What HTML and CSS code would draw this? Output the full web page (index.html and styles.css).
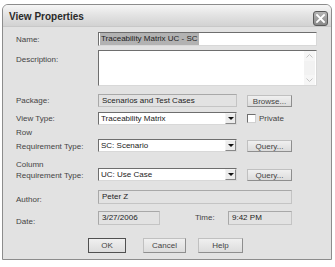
FILE: index.html
```html
<!DOCTYPE html>
<html>
<head>
<meta charset="utf-8">
<link rel="stylesheet" href="styles.css">
</head>
<body>
<div class="window">
  <div class="titlebar">
    <span class="title">View Properties</span>
    <span class="close"><svg width="15" height="15" viewBox="0 0 15 15"><path d="M4 4 L11 11 M11 4 L4 11" stroke="#fff" stroke-width="1.8" stroke-linecap="square"/></svg></span>
  </div>
  <div class="content">
    <div class="row r-name">
      <span class="lbl">Name:</span>
      <div class="field white w-full"><span class="sel">Traceability Matrix UC - SC</span></div>
    </div>
    <div class="row r-desc">
      <span class="lbl lbl-top">Description:</span>
      <div class="field white w-full desc">
        <div class="scroll">
          <span class="sarrow"><svg width="9" height="6" viewBox="0 0 9 6"><path d="M1.5 4.5 L4.5 1.5 L7.5 4.5" fill="none" stroke="#c4c4c4" stroke-width="1"/></svg></span>
          <span class="sarrow"><svg width="9" height="6" viewBox="0 0 9 6"><path d="M1.5 1.5 L4.5 4.5 L7.5 1.5" fill="none" stroke="#c4c4c4" stroke-width="1"/></svg></span>
        </div>
      </div>
    </div>
    <div class="row r-pkg">
      <span class="lbl">Package:</span>
      <div class="field ro w-mid">Scenarios and Test Cases</div>
      <span class="btn side">Browse...</span>
    </div>
    <div class="row r-view">
      <span class="lbl">View Type:</span>
      <div class="select w-mid">Traceability Matrix<span class="drop"><span class="tri"></span></span></div>
      <span class="check"></span>
      <span class="chk-text">Private</span>
    </div>
    <div class="row r-rowreq">
      <span class="lbl lbl2"><span class="l1 l1-row">Row</span><span class="l2 l2-row">Requirement Type:</span></span>
      <div class="select w-mid sel-bottom">SC: Scenario<span class="drop"><span class="tri"></span></span></div>
      <span class="btn side sel-bottom">Query...</span>
    </div>
    <div class="row r-colreq">
      <span class="lbl lbl2"><span class="l1 l1-col">Column</span><span class="l2 l2-col">Requirement Type:</span></span>
      <div class="select w-mid">UC: Use Case<span class="drop"><span class="tri"></span></span></div>
      <span class="btn side">Query...</span>
    </div>
    <div class="row r-author">
      <span class="lbl lbl-author">Author:</span>
      <div class="field ro w-author">Peter Z</div>
    </div>
    <div class="row r-date">
      <span class="lbl lbl-date">Date:</span>
      <div class="field ro w-date">3/27/2006</div>
      <span class="time-lbl">Time:</span>
      <div class="field ro w-time">9:42 PM</div>
    </div>
    <div class="row r-buttons">
      <span class="btn b-ok">OK</span>
      <span class="btn b-cancel">Cancel</span>
      <span class="btn b-help">Help</span>
    </div>
  </div>
</div>
</body>
</html>
```

FILE: styles.css
```css
html, body {
  margin: 0;
  padding: 0;
  background: #ffffff;
}
body {
  font-family: "Liberation Sans", Arial, sans-serif;
  font-size: 8px;
  color: #3c3c3c;
}
.window {
  margin: 4px 0 0 2px;
  width: 330px;
  height: 256px;
  box-sizing: border-box;
  border: 1px solid #8c8c8c;
  border-radius: 6px 6px 0 0;
  background: #e2e2e2;
  display: flex;
  flex-direction: column;
  overflow: hidden;
}
.titlebar {
  height: 22px;
  flex: none;
  display: flex;
  align-items: center;
  justify-content: space-between;
  padding: 0 3px 0 6px;
  background: linear-gradient(#f6f6f6 0%, #e4e4e4 45%, #d2d2d2 100%);
  border-bottom: 1px solid #c8c8c8;
  box-sizing: border-box;
}
.title {
  font-weight: bold;
  font-size: 10px;
  color: #2a2a2a;
  margin-top: 2px;
}
.close {
  width: 15px;
  height: 15px;
  box-sizing: border-box;
  border: 1px solid #5a5a5a;
  border-radius: 3px;
  background: linear-gradient(#b4b4b4, #8a8a8a);
  display: flex;
  margin-top: 6px;
}
.close svg {
  margin: -1px;
}
.content {
  flex: 1;
  padding: 0 0 0 13px;
  display: flex;
  flex-direction: column;
}
.row {
  display: flex;
  align-items: center;
}
.lbl {
  width: 82px;
  flex: none;
  color: #444;
}
.field {
  box-sizing: border-box;
  padding: 0 2px;
  white-space: nowrap;
  overflow: hidden;
  color: #222;
}
.white {
  background: #fff;
  border: 1px solid #d8d8d8;
  border-top-color: #6e6e6e;
  border-left-color: #6e6e6e;
}
.ro {
  background: #e2e2e2;
  border: 1px solid #a8a8a8;
  border-right-color: #c4c4c4;
  border-bottom-color: #c4c4c4;
  padding-left: 3px;
}
.w-full { width: 219px; }
.w-mid { width: 139px; }
.w-author { width: 194px; }
.w-date { width: 62px; }
.w-time { width: 64px; }

.r-name { margin-top: 5px; height: 14px; }
.r-name .field { height: 14px; line-height: 12px; padding: 0 1px; }
.sel {
  background: #b2b2b2;
  display: inline-block;
  height: 12px;
  padding: 0 1px;
  color: #1e1e1e;
}
.r-desc {
  margin-top: 4px;
  height: 36px;
  align-items: flex-start;
}
.lbl-top { padding-top: 5px; line-height: 10px; }
.desc {
  height: 36px;
  display: flex;
  justify-content: flex-end;
  padding: 0;
}
.scroll {
  width: 11px;
  display: flex;
  flex-direction: column;
  justify-content: space-between;
  background: #f2f2f2;
  margin-right: 1px;
}
.sarrow {
  height: 10px;
  display: flex;
  align-items: center;
  justify-content: center;
  background: #f6f6f6;
}
.r-pkg { margin-top: 8px; height: 13px; }
.r-pkg .field { height: 13px; line-height: 11px; }
.btn {
  box-sizing: border-box;
  display: flex;
  align-items: center;
  justify-content: center;
  background: linear-gradient(#f0f0f0, #dcdcdc);
  border: 1px solid #8e8e8e;
  border-top-color: #c0c0c0;
  border-left-color: #c0c0c0;
  color: #444;
  flex: none;
}
.side {
  width: 45px;
  height: 12px;
  margin-left: 10px;
  margin-top: 1px;
}
.r-view { margin-top: 5px; height: 13px; }
.select {
  box-sizing: border-box;
  height: 13px;
  background: #fff;
  border: 1px solid #d8d8d8;
  border-top-color: #6e6e6e;
  border-left-color: #6e6e6e;
  padding-left: 2px;
  display: flex;
  align-items: center;
  justify-content: space-between;
  color: #222;
}
.drop {
  width: 11px;
  height: 11px;
  box-sizing: border-box;
  background: #ececec;
  border: 1px solid #888;
  border-top-color: #f4f4f4;
  border-left-color: #f4f4f4;
  display: flex;
  align-items: center;
  justify-content: center;
}
.tri {
  width: 0;
  height: 0;
  border-left: 3px solid transparent;
  border-right: 3px solid transparent;
  border-top: 3px solid #111;
}
.check {
  width: 9px;
  height: 9px;
  box-sizing: border-box;
  background: #fff;
  border: 1px solid #6e6e6e;
  border-right-color: #d0d0d0;
  border-bottom-color: #d0d0d0;
  margin-left: 10px;
}
.chk-text {
  margin-left: 3px;
  color: #444;
}
.lbl2 {
  display: flex;
  flex-direction: column;
}
.r-rowreq {
  height: 28px;
  align-items: flex-end;
}
.l1-row { line-height: 15px; }
.l2-row { line-height: 13px; }
.r-rowreq .select { margin-bottom: 1px; }
.r-rowreq .side { margin-bottom: 1px; }
.r-colreq {
  margin-top: 6px;
  height: 22px;
  align-items: flex-end;
}
.l1-col { line-height: 11px; }
.l2-col { line-height: 11px; }
.r-author {
  margin-top: 9px;
  height: 14px;
  align-items: flex-start;
}
.r-author .field { height: 14px; line-height: 12px; }
.lbl-author { padding-top: 3px; line-height: 14px; }
.r-date {
  margin-top: 7px;
  height: 14px;
  align-items: flex-start;
}
.r-date .field { height: 14px; line-height: 12px; }
.lbl-date { padding-top: 4px; line-height: 14px; }
.time-lbl {
  margin-left: 35px;
  width: 33px;
  line-height: 14px;
  color: #444;
}
.r-buttons {
  margin-top: 13px;
  height: 15px;
  padding-left: 72px;
}
.r-buttons .btn { height: 15px; }
.b-ok {
  width: 38px;
  border-color: #505050;
}
.b-cancel {
  width: 43px;
  margin-left: 17px;
}
.b-help {
  width: 45px;
  margin-left: 12px;
}
```
